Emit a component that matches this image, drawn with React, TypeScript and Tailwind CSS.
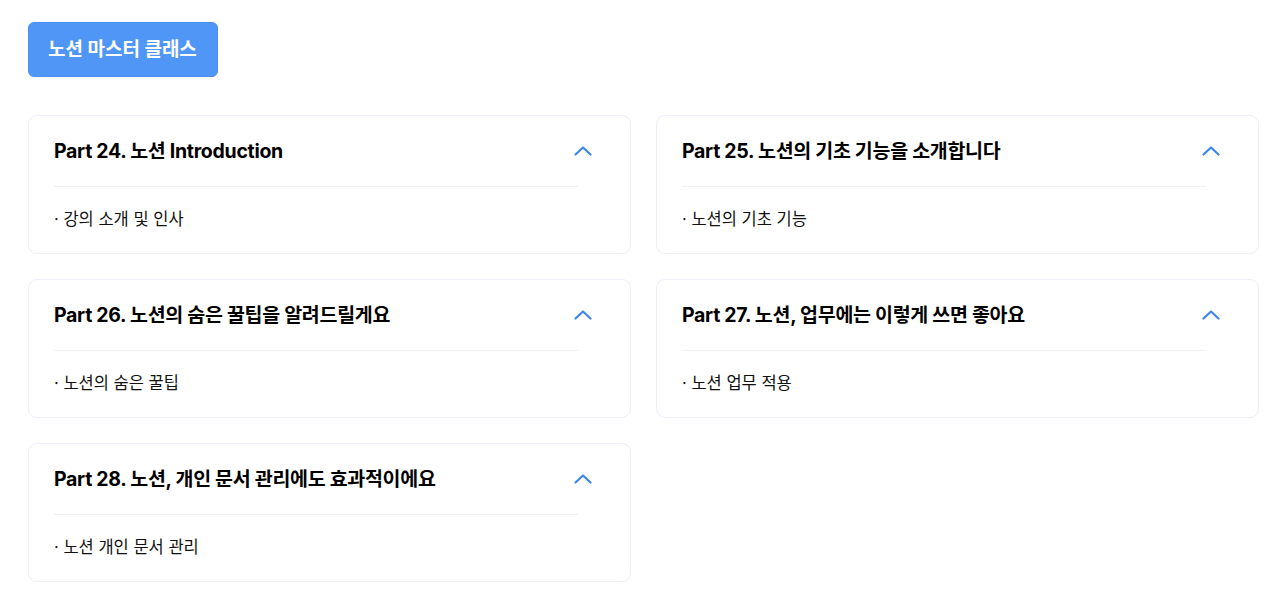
const parts = [
  { title: 'Part 24. 노션 Introduction', items: ['강의 소개 및 인사'] },
  { title: 'Part 25. 노션의 기초 기능을 소개합니다', items: ['노션의 기초 기능'] },
  { title: 'Part 26. 노션의 숨은 꿀팁을 알려드릴게요', items: ['노션의 숨은 꿀팁'] },
  { title: 'Part 27. 노션, 업무에는 이렇게 쓰면 좋아요', items: ['노션 업무 적용'] },
  { title: 'Part 28. 노션, 개인 문서 관리에도 효과적이에요', items: ['노션 개인 문서 관리'] },
]

function Chevron() {
  return (
    <svg width="18" height="10" viewBox="0 0 18 10" fill="none" className="mr-[13px]">
      <polyline
        points="1.5,8.5 9,1.5 16.5,8.5"
        stroke="#3b86f0"
        strokeWidth="2.2"
        strokeLinecap="round"
        strokeLinejoin="round"
      />
    </svg>
  )
}

export default function App() {
  return (
    <div
      className="min-h-screen bg-white pl-[28px] pr-[21px] pt-[22px] text-black"
      style={{ fontFamily: 'Inter, "Noto Sans CJK KR", sans-serif' }}
    >
      <button className="flex h-[55px] items-center rounded-[6px] border border-[#4a8ef0] bg-[#5096f7] pl-[19px] pr-[20px] pt-[2px] text-[19px] font-bold text-white">
        노션 마스터 클래스
      </button>

      <div className="mt-[38px] grid grid-cols-2 gap-x-[25px] gap-y-[25px]">
        {parts.map((part) => (
          <div key={part.title} className="rounded-[9px] border border-[#eceffa] bg-white">
            <div className="mx-[25px] flex items-center justify-between pt-[23px] pb-[23px]">
              <h3 className="text-[19.5px] leading-[24px] font-bold tracking-[-0.015em]">{part.title}</h3>
              <Chevron />
            </div>
            <div className="ml-[25px] mr-[52px] h-px bg-[#eef0fb]" />
            <ul className="px-[25px] pt-[20px] pb-[22px]">
              {part.items.map((item) => (
                <li key={item} className="text-[16.5px] leading-[24px] text-[#111]">
                  · {item}
                </li>
              ))}
            </ul>
          </div>
        ))}
      </div>
    </div>
  )
}
